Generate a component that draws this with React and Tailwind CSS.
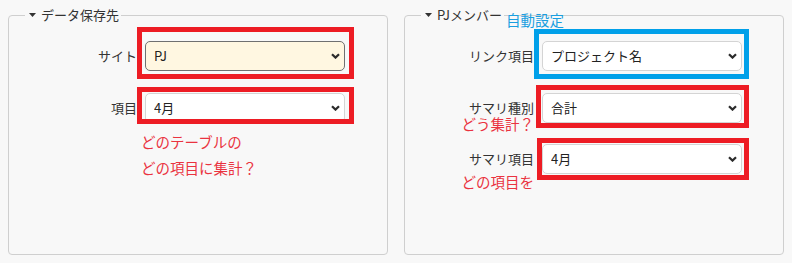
import React from 'react'

const RED = 'border-[#ed1c24]'
const BLUE = 'border-[#00a0e9]'

function Chevron() {
  return (
    <svg
      className="pointer-events-none absolute right-[5px] top-1/2 -translate-y-1/2"
      width="9"
      height="6"
      viewBox="0 0 9 6"
    >
      <path d="M1 1.2l3.5 3.4L8 1.2" fill="none" stroke="#2b2b2b" strokeWidth="2.2" />
    </svg>
  )
}

function Select({ value, cream, mark }) {
  return (
    <div className="relative h-[30px] w-[200px] shrink-0">
      <select
        defaultValue={value}
        className={`h-full w-full appearance-none rounded-[5px] border pl-2 pr-6 text-[13px] text-[#222] outline-none ${
          cream ? 'border-[#707070] bg-[#fff7e1]' : 'border-[#d4d4d4] bg-white'
        }`}
      >
        <option>{value}</option>
      </select>
      <Chevron />
      {mark && <span className={`pointer-events-none absolute border-[5px] ${mark}`} />}
    </div>
  )
}

function Row({ label, note, noteClass = '', className = '', children }) {
  return (
    <div className={`flex h-[30px] items-start gap-2 ${className}`}>
      <div className="w-[128px] shrink-0 pt-[6px] text-right text-[13px] leading-[18px] text-[#333]">
        <div>{label}</div>
        {note && (
          <div className={`whitespace-nowrap text-[14.5px] text-[#ea3340] ${noteClass}`}>{note}</div>
        )}
      </div>
      {children}
    </div>
  )
}

function Legend({ title, extra }) {
  return (
    <legend className="relative ml-4 flex items-center gap-[5px] pl-1 pr-[2px] text-[13px] leading-[18px] text-[#333]">
      <svg width="7" height="4" viewBox="0 0 7 4">
        <polygon points="0,0 7,0 3.5,4" fill="#333" />
      </svg>
      <span>{title}</span>
      {extra}
    </legend>
  )
}

export default function App() {
  return (
    <div className="flex h-[263px] gap-4 bg-[#f8f8f8] px-2 pt-[6px] font-['Noto_Sans_CJK_JP',sans-serif]">
      <fieldset className="h-[249px] w-[380px] min-w-0 rounded border border-[#cfcfcf] p-0">
        <Legend title="データ保存先" />
        <div className="pt-[17px]">
          <Row label="サイト">
            <Select value="PJ" cream mark={`-left-2 -right-[9px] -top-[14px] -bottom-2 ${RED}`} />
          </Row>
          <Row label="項目" className="mt-[22px]">
            <Select value="4月" mark={`-left-2 -right-[9px] -top-[6px] -bottom-px ${RED}`} />
          </Row>
          <div className="mt-[6px] pl-[132px] text-[14.5px] leading-[26px] text-[#ea3340]">
            どのテーブルの
            <br />
            どの項目に集計？
          </div>
        </div>
      </fieldset>

      <fieldset className="h-[249px] w-[380px] min-w-0 rounded border border-[#cfcfcf] p-0">
        <Legend
          title="PJメンバー"
          extra={
            <span className="absolute left-full top-[5px] ml-[2px] whitespace-nowrap text-[14.5px] leading-[18px] text-[#1a9fe0]">
              自動設定
            </span>
          }
        />
        <div className="pl-px pt-[17px]">
          <Row label="リンク項目">
            <Select value="プロジェクト名" mark={`-left-2 -right-[7px] -top-[12px] -bottom-2 ${BLUE}`} />
          </Row>
          <Row label="サマリ種別" note="どう集計？" noteClass="leading-[14px]" className="mt-[22px]">
            <Select value="合計" mark={`-left-[6px] -right-[7px] -top-2 -bottom-[5px] ${RED}`} />
          </Row>
          <Row label="サマリ項目" note="どの項目を" noteClass="mt-[5px] leading-[18px]" className="mt-[21px]">
            <Select value="4月" mark={`-left-[5px] -right-[7px] -top-[6px] -bottom-[6px] ${RED}`} />
          </Row>
        </div>
      </fieldset>
    </div>
  )
}
